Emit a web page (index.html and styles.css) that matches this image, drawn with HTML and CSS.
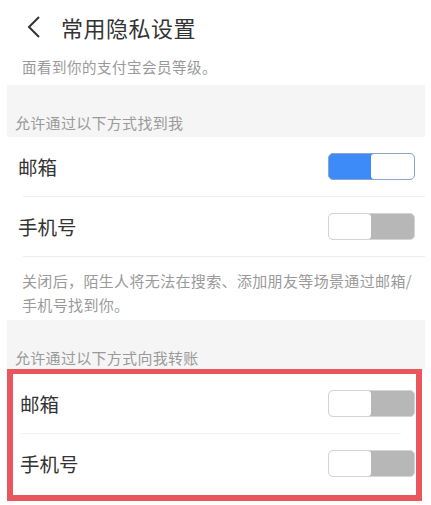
FILE: index.html
```html
<!DOCTYPE html>
<html lang="zh">
<head>
    <meta charset="UTF-8">
    <meta name="viewport" content="width=device-width, initial-scale=1.0">
    <title>常用隐私设置</title>
    <link rel="stylesheet" href="styles.css">
</head>
<body>
    <!-- 顶部标题栏 -->
    <div class="header">
        <svg class="back" width="14" height="22" viewBox="0 0 14 22">
            <path d="M12 1 L2 11 L12 21" fill="none" stroke="#333" stroke-width="2"/>
        </svg>
        <h1 class="title">常用隐私设置</h1>
    </div>
    <p class="intro">面看到你的支付宝会员等级。</p>

    <!-- 找到我 -->
    <div class="group-title">允许通过以下方式找到我</div>
    <div class="list">
        <div class="row">
            <span class="label">邮箱</span>
            <span class="switch on"><i></i></span>
        </div>
        <div class="line"></div>
        <div class="row">
            <span class="label">手机号</span>
            <span class="switch"><i></i></span>
        </div>
        <div class="line"></div>
    </div>
    <p class="note">关闭后，陌生人将无法在搜索、添加朋友等场景通过邮箱/<br>手机号找到你。</p>

    <!-- 向我转账 -->
    <div class="group-title second">允许通过以下方式向我转账</div>
    <div class="list marked">
        <div class="row">
            <span class="label">邮箱</span>
            <span class="switch"><i></i></span>
        </div>
        <div class="line short"></div>
        <div class="row">
            <span class="label">手机号</span>
            <span class="switch"><i></i></span>
        </div>
    </div>
</body>
</html>
```

FILE: styles.css
```css
body {
    margin: 0;
    padding: 0;
    background-color: #fff;
    font-family: "Noto Sans CJK SC", "Noto Sans", sans-serif;
    color: #333;
    overflow: hidden;
}

/* 标题栏 */
.header {
    display: flex;
    align-items: center;
    height: 54px;
    padding-left: 27px;
}

.back {
    display: block;
    margin-right: 20px;
}

.title {
    margin: 0;
    font-size: 22px;
    font-weight: normal;
    color: #333;
    letter-spacing: 0.5px;
}

.intro {
    margin: 0;
    padding: 1px 0 0 22px;
    height: 30px;
    line-height: 24px;
    font-size: 14.5px;
    letter-spacing: 0.5px;
    color: #9a9a9a;
}

/* 分组标题 */
.group-title {
    display: flex;
    align-items: flex-end;
    margin: 0 6px 0 7px;
    height: 52px;
    padding: 0 0 4px 8px;
    box-sizing: border-box;
    background-color: #f5f5f5;
    font-size: 15px;
    letter-spacing: 0.3px;
    color: #9a9a9a;
}

.group-title.second {
    height: 49px;
    padding-bottom: 1px;
}

/* 列表 */
.list {
    margin: 0 6px 0 7px;
}

.row {
    display: flex;
    align-items: center;
    justify-content: space-between;
    height: 59px;
    padding: 0 10px 0 11px;
}

.label {
    font-size: 19.5px;
    color: #333;
}

.line {
    height: 1px;
    margin-left: 16px;
    background-color: #eeeeee;
}

.list.marked {
    margin: 0 9px 0 7px;
    padding-bottom: 2px;
    border: 6px solid #e9565b;
    border-top-width: 5px;
}

.list.marked .row {
    padding: 0 1px 0 7px;
}

.line.short {
    margin: 0 15px 0 7px;
    background-color: #f3f3f3;
}

/* 开关 */
.switch {
    display: flex;
    justify-content: flex-start;
    width: 87px;
    height: 27px;
    box-sizing: border-box;
    border: 1.5px solid #d4d4d4;
    border-radius: 5px;
    background-color: #b7b7b7;
    overflow: hidden;
}

.switch i {
    display: block;
    width: 42px;
    height: 100%;
    background-color: #fff;
    border-radius: 3px;
}

.switch.on {
    justify-content: flex-end;
    border-color: #8ba6ca;
    background-color: #3d8bf8;
}

.switch.on i {
    width: 43px;
}

.note {
    margin: 0;
    padding: 12px 8px 3px 22px;
    line-height: 24px;
    font-size: 15px;
    letter-spacing: 0.35px;
    color: #9a9a9a;
}
```
